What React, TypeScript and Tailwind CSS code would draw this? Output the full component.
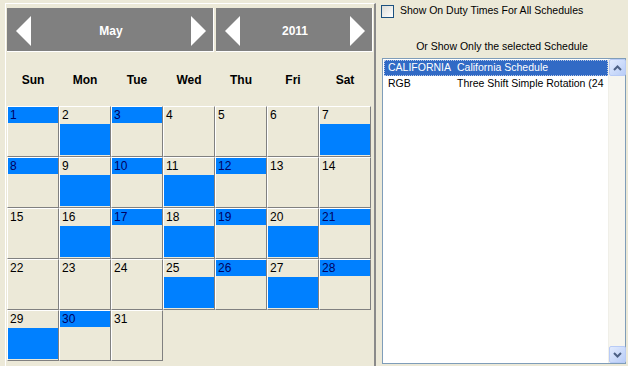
import React from "react";

type Mark = "top" | "bottom" | "none";

const marks: Record<number, Mark> = {
  1: "top", 2: "bottom", 3: "top", 7: "bottom",
  8: "top", 9: "bottom", 10: "top", 11: "bottom", 12: "top",
  16: "bottom", 17: "top", 18: "bottom", 19: "top", 20: "bottom", 21: "top",
  25: "bottom", 26: "top", 27: "bottom", 28: "top",
  29: "bottom", 30: "top",
};

const weekDays = ["Sun", "Mon", "Tue", "Wed", "Thu", "Fri", "Sat"];

function Arrow({ dir }: { dir: "left" | "right" }) {
  return (
    <svg width="15" height="30" viewBox="0 0 15 30" className="shrink-0">
      <polygon points={dir === "left" ? "15,0 15,30 0,15" : "0,0 0,30 15,15"} fill="#ffffff" />
    </svg>
  );
}

function NavBox({ label, wide }: { label: string; wide?: boolean }) {
  return (
    <div
      className={`flex h-[44px] items-center justify-between border-r border-b border-white bg-[#808080] pt-[3px] pl-[9px] pr-[7px] ${
        wide ? "w-[207px]" : "w-[157px]"
      }`}
    >
      <Arrow dir="left" />
      <span className="text-[12px] font-bold text-white">{label}</span>
      <Arrow dir="right" />
    </div>
  );
}

function DayCell({ day }: { day: number }) {
  const m = marks[day] ?? "none";
  return (
    <div className="flex h-[51px] w-[52px] flex-col border border-t-white border-l-white border-r-[#808080] border-b-[#808080]">
      <div
        className={`h-[16px] pl-[2px] text-[12px] leading-[16px] ${
          m === "top" ? "bg-[#0080ff] text-[#000060]" : "text-black"
        }`}
      >
        {day}
      </div>
      <div className={`mt-[1px] mb-[1px] flex-1 ${m === "bottom" ? "bg-[#0080ff]" : ""}`} />
    </div>
  );
}

function ScrollButton({ up }: { up?: boolean }) {
  return (
    <div className="flex h-[17px] w-[17px] items-center justify-center rounded-[2px] border border-[#b8cbf6] bg-gradient-to-br from-[#e2ebfe] to-[#b9cdf7]">
      <svg width="9" height="6" viewBox="0 0 9 6">
        <polyline
          points={up ? "1,5 4.5,1.5 8,5" : "1,1 4.5,4.5 8,1"}
          fill="none"
          stroke="#4d6185"
          strokeWidth="2"
        />
      </svg>
    </div>
  );
}

export default function App() {
  const days = Array.from({ length: 31 }, (_, i) => i + 1);

  return (
    <div className="flex h-[366px] w-[628px] overflow-hidden bg-[#ece9d8] font-['Liberation_Sans',Arial,sans-serif]">
      {/* calendar */}
      <div className="mt-[3px] ml-[5px] flex h-[363px] w-[371px] flex-col border-t border-l border-white border-r-2 border-r-[#8a8a8a] pt-[4px] pl-[1px]">
        <div className="flex gap-[2px]">
          <NavBox label="May" wide />
          <NavBox label="2011" />
        </div>
        <div className="grid h-[54px] w-[364px] grid-cols-7 items-center">
          {weekDays.map((d) => (
            <div key={d} className="pt-[1px] text-center text-[12px] font-bold text-black">
              {d}
            </div>
          ))}
        </div>
        <div className="grid w-[364px] grid-cols-7">
          {days.map((d) => (
            <DayCell key={d} day={d} />
          ))}
        </div>
      </div>

      {/* schedules */}
      <div className="flex flex-1 flex-col">
        <label className="mt-[4px] ml-[5px] flex h-[14px] items-center gap-[6px] text-[10.5px] text-black">
          <span className="h-[13px] w-[13px] border border-[#1c5180] bg-gradient-to-br from-[#dcdcd7] to-white" />
          Show On Duty Times For All Schedules
        </label>
        <p className="mt-[22px] h-[13px] text-center text-[10.5px] leading-[13px] text-black">
          Or Show Only the selected Schedule
        </p>
        <div className="mt-[5px] ml-[6px] flex h-[306px] w-[244px] border border-[#7f9db9] bg-white">
          <div className="flex-1 pt-[1px] pl-[1px] text-[10.5px]">
            <div className="flex h-[16px] items-center border border-dotted border-[#b9c9e6] bg-[#316ac5] pl-[3px] text-white">
              <span className="w-[69px]">CALIFORNIA</span>
              <span>California Schedule</span>
            </div>
            <div className="flex h-[15px] items-center pl-[4px] text-black">
              <span className="w-[69px]">RGB</span>
              <span className="whitespace-nowrap">Three Shift Simple Rotation (24</span>
            </div>
          </div>
          <div className="flex w-[17px] flex-col justify-between border-l border-[#f0efe8] bg-[#f6f5ef]">
            <ScrollButton up />
            <ScrollButton />
          </div>
        </div>
      </div>
    </div>
  );
}
